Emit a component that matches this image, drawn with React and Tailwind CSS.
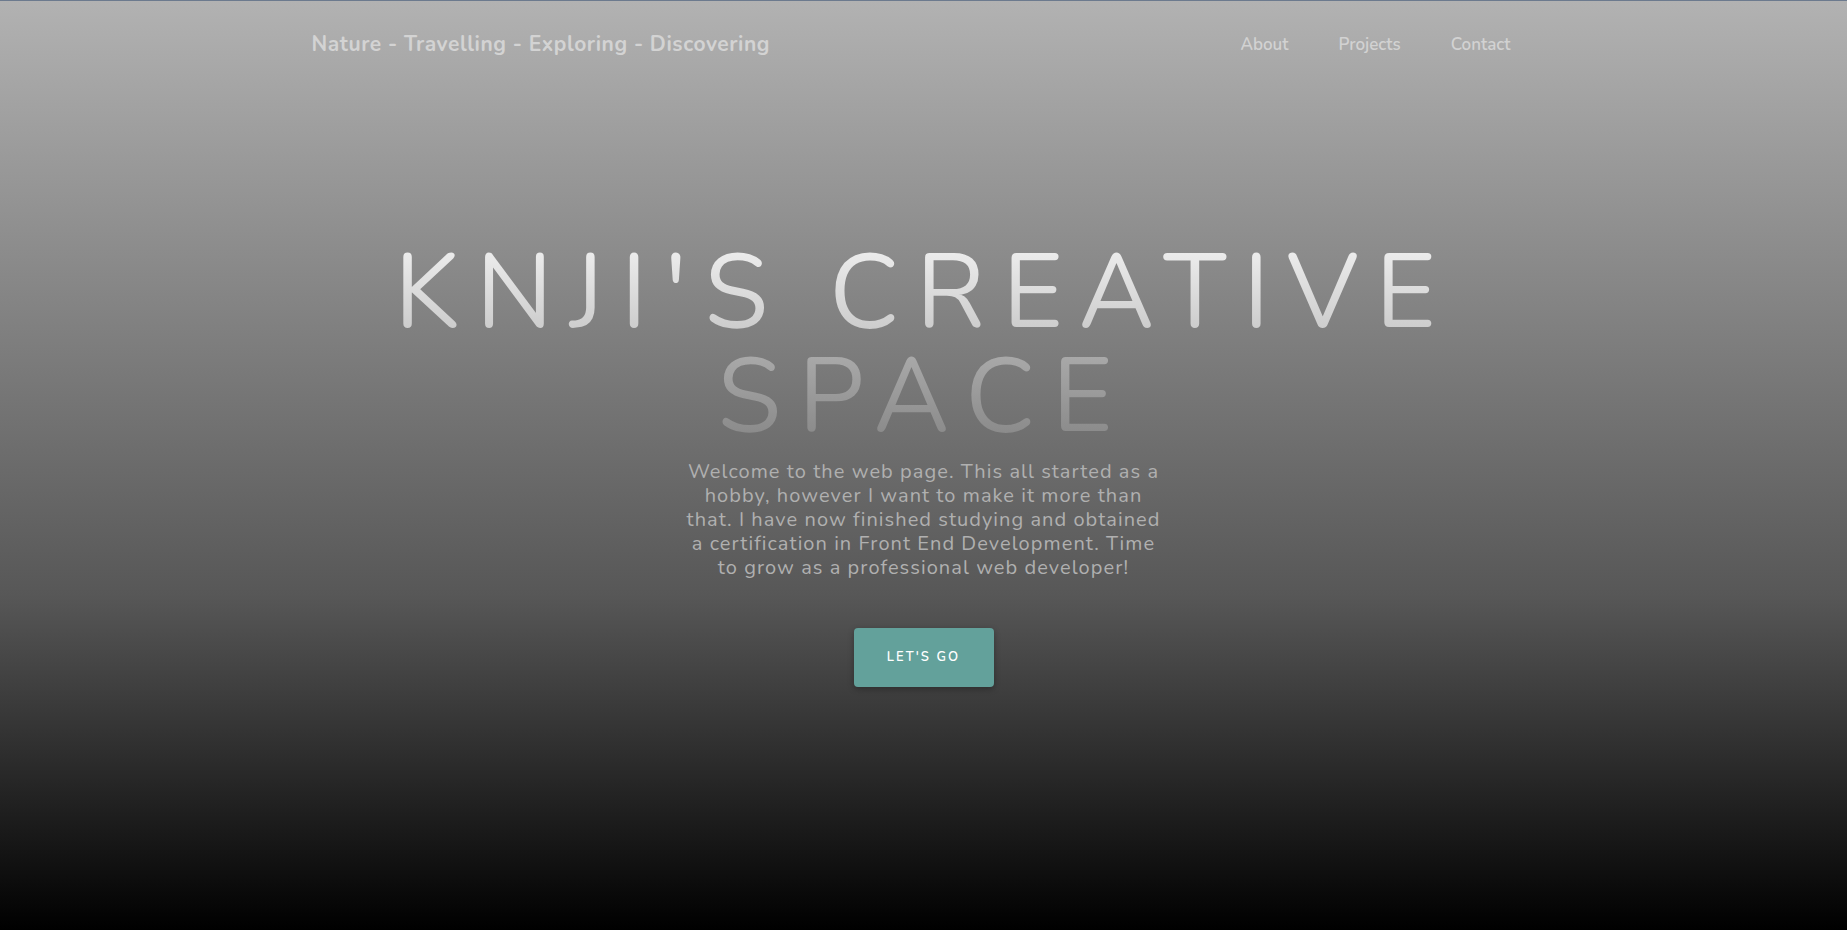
import React from 'react';

const links = ['About', 'Projects', 'Contact'];

const App = () => {
  return (
    <div
      className="min-h-[930px] w-full border-t border-[#6c7a8e] bg-[linear-gradient(to_bottom,#b2b2b2_0%,#575757_64%,#000_100%)]"
      style={{ fontFamily: '"Nunito", "Lato", "Noto Sans", sans-serif' }}
    >
      <header className="mx-auto flex h-[88px] w-[1224px] items-center justify-between">
        <a href="#" className="text-[21px] font-bold tracking-[0.027em] text-[#d3d3d3]">
          Nature - Travelling - Exploring - Discovering
        </a>
        <nav className="flex">
          {links.map((link) => (
            <a key={link} href="#" className="px-[25px] text-[17px] font-semibold text-[#d2d2d2]">
              {link}
            </a>
          ))}
        </nav>
      </header>

      <main className="flex flex-col items-center pt-[152px] text-center">
        <h1 className="font-normal uppercase leading-[1] tracking-[0.163em] text-[104px]">
          <span className="block bg-[linear-gradient(to_bottom,#f0f0f0,#c6c6c6)] bg-clip-text text-transparent">
            Knji's Creative
          </span>
          <span className="block bg-[linear-gradient(to_bottom,#adadad,#858585)] bg-clip-text text-transparent">
            Space
          </span>
        </h1>

        <p className="mt-[11px] w-[480px] text-[20px] leading-[24px] tracking-[0.053em] text-[#b0b0b0]">
          Welcome to the web page. This all started as a hobby, however I want to make it more than
          that. I have now finished studying and obtained a certification in Front End Development.
          Time to grow as a professional web developer!
        </p>

        <button
          type="button"
          className="mt-[48px] h-[59px] w-[140px] rounded-[4px] bg-[#63a19b] text-[13px] font-semibold uppercase tracking-[0.16em] text-white shadow-[0_2px_6px_rgba(0,0,0,0.3)]"
        >
          Let's Go
        </button>
      </main>
    </div>
  );
};

export default App;
